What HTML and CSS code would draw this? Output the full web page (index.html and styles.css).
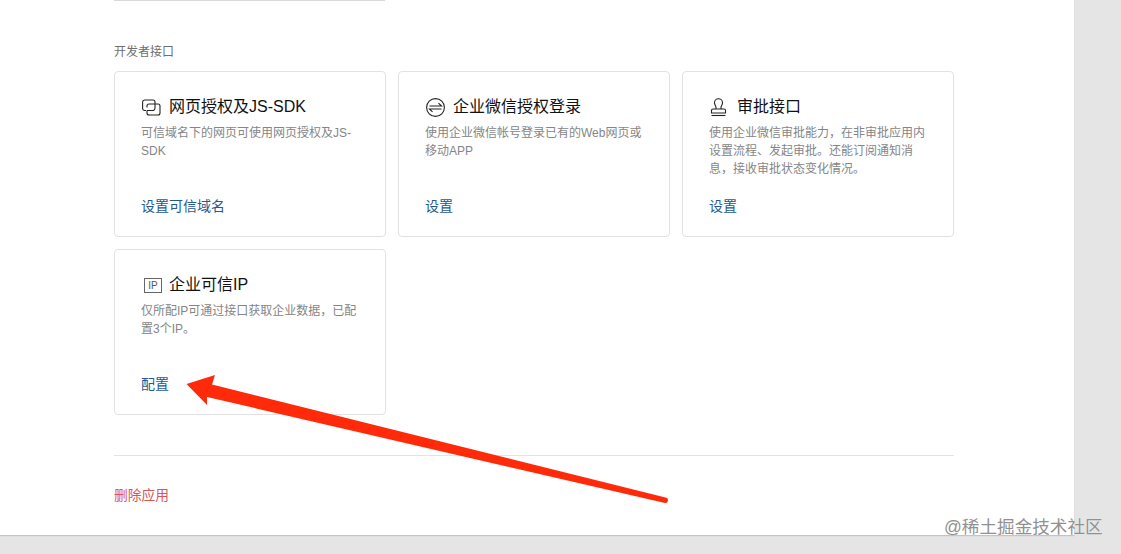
FILE: index.html
```html
<!DOCTYPE html>
<html lang="zh-CN">
<head>
<meta charset="utf-8">
<title>开发者接口</title>
<link rel="stylesheet" href="styles.css">
</head>
<body>
<main class="panel">
  <div class="top-rule"></div>
  <h2 class="section-title">开发者接口</h2>
  <section class="card-grid">
    <article class="card">
      <h3 class="card-title">
        <svg class="icon" viewBox="0 0 19 19" fill="none" stroke="currentColor" stroke-width="1.1"><path d="M4 12.5H2.500A2 2 0 0 1 .6 10.500V4A2 2 0 0 1 2.500 2H11A2 2 0 0 1 13 4V6"/><path d="M5 9.500V8A2 2 0 0 1 7 6H16A2 2 0 0 1 18 8V15A2 2 0 0 1 16 17H7A2 2 0 0 1 5 15V12.500"/><path d="M5 12.500H10.500A2.500 2.500 0 0 0 13 10V6"/></svg>
        <span>网页授权及JS-SDK</span>
      </h3>
      <p class="card-desc">可信域名下的网页可使用网页授权及JS-SDK</p>
      <a class="card-link">设置可信域名</a>
    </article>
    <article class="card">
      <h3 class="card-title">
        <svg class="icon" viewBox="0 0 19 19" fill="none" stroke="currentColor" stroke-width="1.1"><circle cx="9.500" cy="9.500" r="8.900"/><path d="M3.500 8H15.500L12.500 5.200"/><path d="M15.500 11H3.500L6.500 13.800"/></svg>
        <span>企业微信授权登录</span>
      </h3>
      <p class="card-desc">使用企业微信帐号登录已有的Web网页或移动APP</p>
      <a class="card-link">设置</a>
    </article>
    <article class="card">
      <h3 class="card-title">
        <svg class="icon" viewBox="0 0 19 19" fill="none" stroke="currentColor" stroke-width="1.1"><path d="M6 11V9.500C6 8 4.500 7 4.500 4.800a4 4 0 0 1 8 0C12.500 7 11 8 11 9.500V11"/><path d="M1.500 15V12.500A1.500 1.500 0 0 1 3 11H14A1.500 1.500 0 0 1 15.500 12.500V15Z"/><path d="M1.500 17.500H15.500"/></svg>
        <span>审批接口</span>
      </h3>
      <p class="card-desc">使用企业微信审批能力，在非审批应用内设置流程、发起审批。还能订阅通知消息，接收审批状态变化情况。</p>
      <a class="card-link">设置</a>
    </article>
    <article class="card">
      <h3 class="card-title">
        <span class="ip-badge">IP</span>
        <span>企业可信IP</span>
      </h3>
      <p class="card-desc">仅所配IP可通过接口获取企业数据，已配置3个IP。</p>
      <a class="card-link">配置</a>
    </article>
  </section>
  <hr class="divider">
  <a class="danger-link">删除应用</a>
</main>
<svg class="arrow" viewBox="0 0 1121 554" aria-hidden="true"><path d="M186.500 384 215 375 212 384.500 665.500 497.500A2.600 2.600 0 0 1 665 503L207 397 207 405Z" fill="#ff2a0a"/></svg>
<div class="watermark">@稀土掘金技术社区</div>
</body>
</html>
```

FILE: styles.css
```css
* { box-sizing: border-box; }

html, body {
  margin: 0;
  height: 100%;
  overflow: hidden;
}

body {
  position: relative;
  background: #e5e5e6;
  font-family: "Liberation Sans", "Noto Sans CJK SC", sans-serif;
}

.panel {
  width: 1074px;
  height: 535px;
  padding-left: 114px;
  background: #fff;
  box-shadow: 0 1px 1px rgba(0, 0, 0, 0.14);
}

.top-rule {
  width: 271px;
  height: 1px;
  background: #d9d9d9;
}

.section-title {
  margin: 43px 0 0;
  height: 16px;
  font-size: 12px;
  line-height: 16px;
  font-weight: 400;
  color: #6f6f70;
}

.card-grid {
  display: grid;
  grid-template-columns: repeat(3, 272px);
  grid-auto-rows: 166px;
  gap: 12px;
  margin-top: 11px;
}

.card {
  display: flex;
  flex-direction: column;
  padding: 24px 26px 20px;
  border: 1px solid #e2e2e3;
  border-radius: 4px;
  background: #fff;
}

.card-title {
  display: flex;
  align-items: center;
  gap: 8px;
  height: 22px;
  margin: 0;
  font-size: 16px;
  line-height: 22px;
  font-weight: 400;
  color: #111;
}

.icon {
  flex: none;
  width: 19px;
  height: 19px;
  margin-left: 1px;
  color: #222;
}

.ip-badge {
  flex: none;
  width: 18px;
  height: 15px;
  margin-left: 3px;
  margin-right: -1px;
  border: 1px solid #666;
  font-size: 10px;
  line-height: 13px;
  text-align: center;
  color: #555;
}

.card-desc {
  flex: 1;
  margin: 6px 0 0;
  font-size: 12px;
  line-height: 18px;
  color: #858586;
}

.card-link {
  height: 20px;
  font-size: 14px;
  line-height: 20px;
  color: #245a8e;
}

.divider {
  height: 1px;
  width: 840px;
  margin: 40px 0 0;
  border: 0;
  background: #e3e3e4;
}

.danger-link {
  display: block;
  margin-top: 31px;
  font-size: 13.750px;
  line-height: 18px;
  color: #d6565a;
}

.arrow {
  position: absolute;
  left: 0;
  top: 0;
  width: 1121px;
  height: 554px;
  pointer-events: none;
}

.watermark {
  position: absolute;
  left: 944px;
  top: 515px;
  font-size: 17.600px;
  line-height: 24px;
  white-space: nowrap;
  color: #919192;
  text-shadow: 0 0 1px rgba(255, 255, 255, 0.7);
}
```
